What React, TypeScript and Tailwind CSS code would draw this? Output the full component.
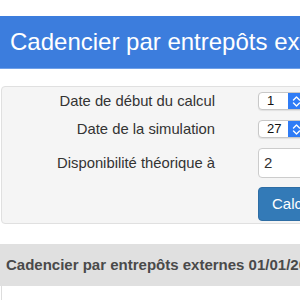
import React from "react";

function Stepper() {
  return (
    <div className="flex h-full w-[16px] items-center justify-center rounded-r-[4px] bg-[#2f7cf6]">
      <svg width="9" height="13" viewBox="0 0 9 13" fill="none" stroke="white" strokeWidth="1.4" strokeLinecap="round" strokeLinejoin="round">
        <path d="M1.5 5 L4.5 2 L7.5 5" />
        <path d="M1.5 8 L4.5 11 L7.5 8" />
      </svg>
    </div>
  );
}

function SelectBox({ value }: { value: string }) {
  return (
    <div className="flex h-[18px] w-[47px] items-stretch rounded-[4px] border border-[#c8c8c8] bg-white shadow-[0_1px_1px_rgba(0,0,0,0.08)]">
      <div className="flex flex-1 items-center pl-[8px] text-[13px] leading-[16px] font-medium text-[#111]">{value}</div>
      <Stepper />
    </div>
  );
}

export default function App() {
  const font = { fontFamily: '"Liberation Sans", Arial, Helvetica, sans-serif' };
  return (
    <div className="h-[300px] w-[300px] overflow-hidden bg-white" style={font}>
      <div className="w-[700px]">
        <div className="mt-[16px] flex h-[53px] items-center border-b border-[#6fa0e8] bg-[#3c7ddd] pl-[10px] text-[24px] leading-[28px] text-white">
          Cadencier par entrepôts externes
        </div>
        <div className="ml-[1px] mt-[17px] rounded-[4px] border border-[#e0e0e0] bg-[#f5f5f5] pb-[2px] pt-[5px]">
          <div className="flex h-[18px] items-center">
            <div className="w-[213px] text-right text-[14.8px] leading-[18px] text-[#333]">Date de début du calcul</div>
            <div className="ml-[43px]">
              <SelectBox value="1" />
            </div>
          </div>
          <div className="mt-[10px] flex h-[18px] items-center">
            <div className="w-[213px] text-right text-[14.8px] leading-[18px] text-[#333]">Date de la simulation</div>
            <div className="ml-[43px]">
              <SelectBox value="27" />
            </div>
          </div>
          <div className="mt-[10px] flex h-[30px] items-center">
            <div className="w-[213px] text-right text-[14.8px] leading-[18px] text-[#333]">Disponibilité théorique à</div>
            <div className="ml-[43px] flex h-[30px] w-[200px] items-center rounded-[4px] border border-[#ccc] bg-white pl-[5px] text-[15px] leading-[18px] text-[#333]">
              2
            </div>
          </div>
          <div className="mt-[9px] flex">
            <div className="ml-[256px] flex h-[34px] items-center rounded-[4px] border border-[#2e6da4] bg-[#337ab7] px-[13px] text-[15px] leading-[18px] text-white">
              Calculer
            </div>
          </div>
        </div>
        <div className="mt-[20px] flex h-[42px] items-center bg-[#e0e0e0] pl-[6px] text-[15px] leading-[18px] font-bold text-[#4a4a4a]">
          Cadencier par entrepôts externes 01/01/2017
        </div>
        <div className="ml-[1px] h-[40px] border-l border-[#ddd] bg-white"></div>
      </div>
    </div>
  );
}
